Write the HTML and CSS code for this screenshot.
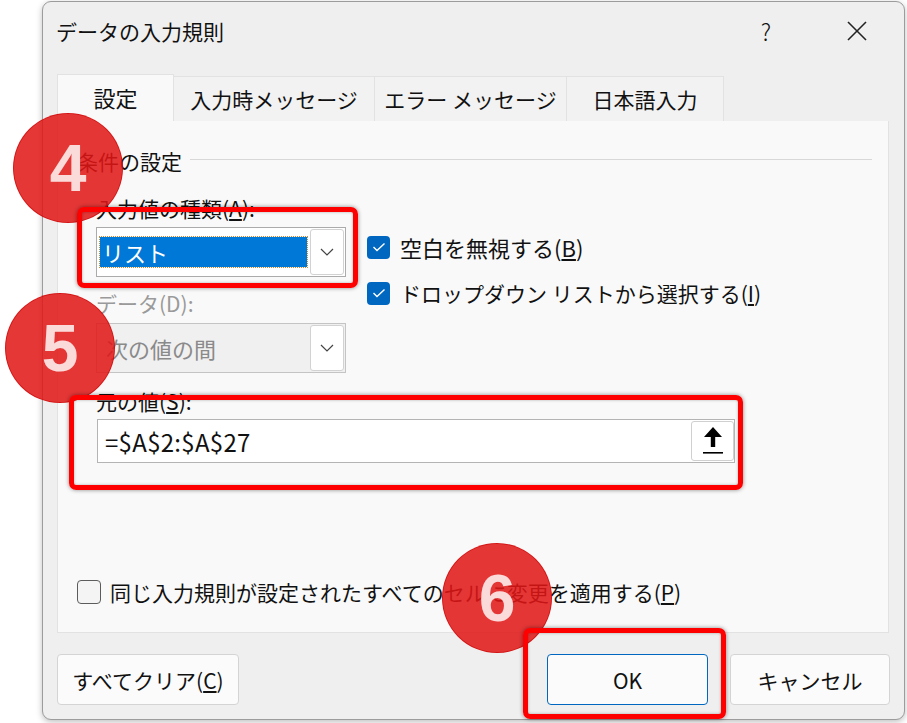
FILE: index.html
```html
<!DOCTYPE html>
<html lang="ja">
<head>
  <meta charset="UTF-8">
  <title>データの入力規則</title>
  <link rel="stylesheet" href="styles.css">
</head>
<body>
  <div class="dialog">
    <div class="titlebar">
      <span class="title">データの入力規則</span>
      <span class="help">?</span>
      <svg class="close" width="22" height="22" viewBox="0 0 22 22">
        <line x1="2" y1="2" x2="20" y2="20" stroke="#222" stroke-width="1.6"/>
        <line x1="20" y1="2" x2="2" y2="20" stroke="#222" stroke-width="1.6"/>
      </svg>
    </div>

    <div class="tabs">
      <div class="tab active">設定</div>
      <div class="tab tab-2">入力時メッセージ</div>
      <div class="tab tab-3">エラー メッセージ</div>
      <div class="tab tab-4">日本語入力</div>
    </div>

    <div class="panel">
      <div class="group-head">
        <span>条件の設定</span>
        <i class="rule"></i>
      </div>

      <div class="criteria">
        <div class="col-left">
          <div class="label">入力値の種類(<u>A</u>):</div>
          <div class="combo">
            <div class="combo-value"><span class="selected">リスト</span></div>
            <div class="combo-btn">
              <svg width="14" height="8" viewBox="0 0 14 8"><polyline points="1,1 7,7 13,1" fill="none" stroke="#444" stroke-width="1.2"/></svg>
            </div>
          </div>
          <div class="label label-off">データ(D):</div>
          <div class="combo combo-off">
            <div class="combo-value">次の値の間</div>
            <div class="combo-btn">
              <svg width="14" height="8" viewBox="0 0 14 8"><polyline points="1,1 7,7 13,1" fill="none" stroke="#444" stroke-width="1.2"/></svg>
            </div>
          </div>
        </div>
        <div class="col-right">
          <div class="check first">
            <span class="box on"><svg width="14" height="10" viewBox="0 0 14 10"><polyline points="1.5,5 5,8.5 12.5,1.5" fill="none" stroke="#fff" stroke-width="1.4"/></svg></span>
            <span>空白を無視する(<u>B</u>)</span>
          </div>
          <div class="check">
            <span class="box on"><svg width="14" height="10" viewBox="0 0 14 10"><polyline points="1.5,5 5,8.5 12.5,1.5" fill="none" stroke="#fff" stroke-width="1.4"/></svg></span>
            <span>ドロップダウン リストから選択する(<u>I</u>)</span>
          </div>
        </div>
      </div>

      <div class="label label-src">元の値(<u>S</u>):</div>
      <div class="source">
        <span class="source-text">=$A$2:$A$27</span>
        <div class="ref-btn">
          <svg width="20" height="30" viewBox="0 0 20 30">
            <polygon points="1,11 10,1 19,11 12.2,11 12.2,21 7.8,21 7.8,11" fill="#000"/>
            <rect x="0" y="26" width="20" height="1.6" fill="#000"/>
          </svg>
        </div>
      </div>

      <div class="check apply">
        <span class="box"></span>
        <span>同じ入力規則が設定されたすべてのセルに変更を適用する(<u>P</u>)</span>
      </div>
    </div>

    <div class="buttons">
      <button class="btn btn-clear">すべてクリア(<u>C</u>)</button>
      <span class="spacer"></span>
      <button class="btn btn-ok">OK</button>
      <button class="btn btn-cancel">キャンセル</button>
    </div>
  </div>

  <!-- annotations -->
  <div class="badge badge-4">4</div>
  <div class="badge badge-5">5</div>
  <div class="badge badge-6">6</div>
  <div class="mark mark-type"></div>
  <div class="mark mark-src"></div>
  <div class="mark mark-ok"></div>
</body>
</html>
```

FILE: styles.css
```css
body {
  margin: 0;
  background-color: #ffffff;
  font-family: "Noto Sans CJK JP", "Noto Sans", sans-serif;
  color: #111;
  width: 907px;
  height: 723px;
  overflow: hidden;
  position: relative;
}

.dialog {
  box-sizing: border-box;
  margin: 1px 0 0 42px;
  width: 863px;
  height: 719px;
  background-color: #efefef;
  border: 1px solid #9c9c9c;
  border-radius: 9px;
  box-shadow: 0 2px 6px rgba(0,0,0,0.25);
}

.titlebar {
  height: 72px;
  box-sizing: border-box;
  padding: 14px 0 0 13px;
  display: flex;
  align-items: flex-start;
}

.title {
  font-size: 21px;
  line-height: 30px;
  flex: 1;
}

.help {
  font-size: 23px;
  line-height: 30px;
  font-weight: 300;
  margin-right: 75px;
}

.close {
  margin: 4px 36px 0 0;
}

.tabs {
  display: flex;
  align-items: flex-end;
  margin-left: 14px;
  height: 47px;
}

.tab {
  box-sizing: border-box;
  height: 45px;
  border: 1px solid #e2e2e2;
  border-bottom: none;
  border-left: none;
  background-color: #f2f2f2;
  font-size: 21px;
  display: flex;
  align-items: center;
  justify-content: center;
}

.tab.active {
  height: 47px;
  width: 117px;
  border-left: 1px solid #e2e2e2;
  background-color: #f9f9f9;
  padding-bottom: 2px;
  font-size: 22px;
}

.tab-2 { width: 201px; }
.tab-3 { width: 192px; }
.tab-4 { width: 157px; }

.panel {
  box-sizing: border-box;
  margin-left: 14px;
  width: 832px;
  height: 512px;
  background-color: #f9f9f9;
  border: 1px solid #e2e2e2;
  border-top: none;
  padding: 27px 16px 0 19px;
}

.group-head {
  display: flex;
  align-items: center;
  font-size: 21px;
  line-height: 26px;
}

.group-head .rule {
  flex: 1;
  height: 1px;
  background-color: #d8d8d8;
  margin: 0 0 0 8px;
  position: relative;
  top: -2px;
}

.criteria {
  display: flex;
  margin-top: 22px;
  padding-left: 19px;
}

.col-left {
  width: 250px;
}

.label {
  font-size: 21px;
  line-height: 24px;
}

.label-off {
  color: #9a9a9a;
  margin-top: 14px;
}

.label-src {
  margin: 16px 0 0 19px;
}

.combo {
  box-sizing: border-box;
  margin-top: 7px;
  height: 50px;
  border: 1px solid #ababab;
  background-color: #ffffff;
  display: flex;
  align-items: center;
  padding: 0 1px 0 3px;
}

.combo-value {
  flex: 1;
  font-size: 22px;
}

.selected {
  display: block;
  width: 207px;
  height: 30px;
  line-height: 30px;
  background-color: #0078d7;
  color: #ffffff;
  outline: 1px dotted #c98a3a;
  padding-left: 2px;
  box-sizing: border-box;
}

.combo-btn {
  box-sizing: border-box;
  width: 34px;
  height: 46px;
  border: 1px solid #d2d2d2;
  border-radius: 3px;
  background-color: #ffffff;
  display: flex;
  align-items: center;
  justify-content: center;
}

.combo-off {
  margin-top: 8px;
  background-color: #f0f0f0;
  border-color: #c4c4c4;
}

.combo-off .combo-value {
  color: #8a8a8a;
  padding-left: 6px;
}

.col-right {
  margin-left: 21px;
  padding-top: 36px;
}

.check {
  display: flex;
  align-items: center;
  font-size: 21px;
  line-height: 30px;
  height: 30px;
}

.check.first {
  font-size: 22px;
}

.check + .check {
  margin-top: 16px;
}

.box {
  box-sizing: border-box;
  width: 23px;
  height: 23px;
  border-radius: 4px;
  margin-right: 10px;
  display: flex;
  align-items: center;
  justify-content: center;
}

.box.on {
  background-color: #0067c0;
}

.source {
  box-sizing: border-box;
  margin: 6px 0 0 20px;
  width: 638px;
  height: 44px;
  border: 1px solid #b4b4b4;
  background-color: #ffffff;
  display: flex;
  align-items: center;
  padding: 0 0 0 7px;
}

.source-text {
  flex: 1;
  font-size: 24px;
  letter-spacing: 0.3px;
}

.ref-btn {
  box-sizing: border-box;
  width: 43px;
  height: 40px;
  border: 1px solid #d0d0d0;
  border-radius: 3px;
  background-color: #ffffff;
  display: flex;
  align-items: center;
  justify-content: center;
}

.check.apply {
  margin-top: 114px;
}

.apply .box {
  width: 24px;
  height: 24px;
  border: 1px solid #5c5c5c;
  background-color: #f4f4f4;
  margin-right: 9px;
}

.buttons {
  display: flex;
  margin: 21px 14px 0 14px;
  gap: 22px;
}

.spacer {
  flex: 1;
}

.btn {
  box-sizing: border-box;
  height: 51px;
  font-family: inherit;
  font-size: 21px;
  color: #111;
  background-color: #fbfbfb;
  border: 1px solid #d4d4d4;
  border-radius: 4px;
  padding: 0;
}

.btn-clear { width: 182px; }
.btn-ok { width: 161px; border-color: #0067c0; }
.btn-cancel { width: 160px; }

/* annotation overlays */
.badge {
  position: absolute;
  width: 110px;
  height: 110px;
  border-radius: 50%;
  background-color: rgba(226, 22, 22, 0.86);
  border: 1px solid rgba(200, 0, 0, 0.6);
  box-sizing: border-box;
  color: #fbdada;
  font-family: "Liberation Sans", Arial, sans-serif;
  font-weight: bold;
  font-size: 66px;
  display: flex;
  align-items: center;
  justify-content: center;
}

.badge-4 { left: 13px; top: 113px; }
.badge-5 { left: 5px; top: 293px; }
.badge-6 { left: 442px; top: 543px; }

.mark {
  position: absolute;
  box-sizing: border-box;
  border: 5px solid #ff0000;
  border-radius: 7px;
  box-shadow: 0 0 4px rgba(0,0,0,0.45), inset 0 0 3px rgba(0,0,0,0.3);
}

.mark-type { left: 77px; top: 207px; width: 281px; height: 81px; }
.mark-src { left: 69px; top: 395px; width: 674px; height: 95px; }
.mark-ok { left: 523px; top: 628px; width: 203px; height: 91px; }
```
